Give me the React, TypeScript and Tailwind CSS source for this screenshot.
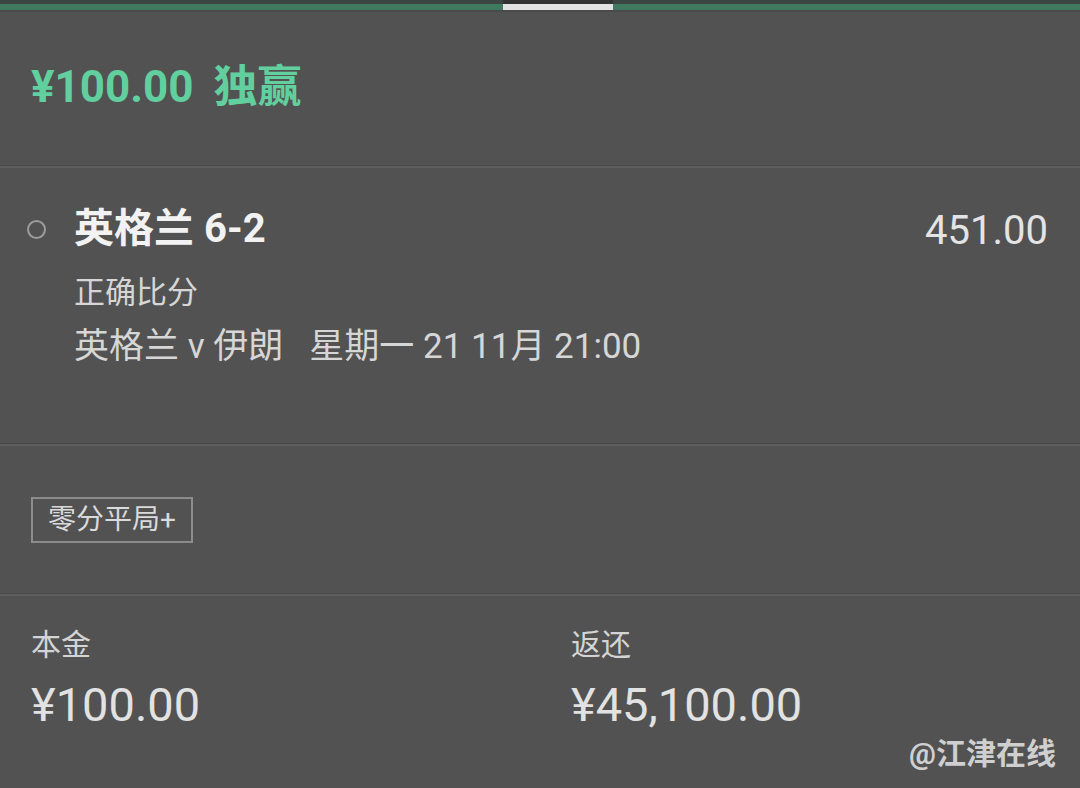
import React from 'react';

const latin = { fontFamily: 'Roboto, "Noto Sans CJK SC", sans-serif' };

const Divider = () => <div className="h-[3px] bg-[#5e5e5e] border-t border-[#494949]" />;

export default function App() {
  return (
    <div className="relative w-[1080px] h-[788px] overflow-hidden bg-[#525252]" style={latin}>
      {/* top tab bar */}
      <div className="flex h-[12px] flex-col">
        <div className="flex h-[4px] bg-[#3b4541]">
          <div className="w-[503px]" />
          <div className="w-[110px] bg-[#333333]" />
        </div>
        <div className="flex h-[6px] bg-[#3f7a60]">
          <div className="w-[503px]" />
          <div className="w-[110px] bg-[#e2e2e2]" />
        </div>
        <div className="h-[2px] bg-[#4a4a4a]" />
      </div>

      {/* header */}
      <div className="flex h-[153px] items-center pl-[31px] pb-[4px] text-[44px] font-bold leading-none text-[#61cf9e]">
        <span>¥100.00</span>
        <span className="ml-[20px]">独赢</span>
      </div>
      <Divider />

      {/* selection */}
      <div className="h-[275px] pt-[35px]">
        <div className="flex items-center justify-between pr-[32px]">
          <div className="flex items-center">
            <div className="ml-[27px] h-[19px] w-[19px] rounded-full border-2 border-[#9c9c9c]" />
            <span className="ml-[28px] text-[40px] font-bold leading-[48px] text-[#f2f2f2]">英格兰 6-2</span>
          </div>
          <span className="pt-[4px] text-[40px] leading-[48px] text-[#e4e4e4]">451.00</span>
        </div>
        <div className="pl-[74px] text-[#d6d6d6]">
          <div className="mt-[18px] text-[31px] leading-[40px]">正确比分</div>
          <div className="mt-[12px] text-[35px] leading-[44px] whitespace-pre">英格兰 v 伊朗   星期一 21 11月 21:00</div>
        </div>
      </div>
      <Divider />

      {/* tag */}
      <div className="h-[147px] pt-[51px] pl-[31px]">
        <div className="inline-flex h-[46px] items-center border-2 border-[#8c8c8c] px-[15px] text-[28px] text-[#dadada]">
          零分平局+
        </div>
      </div>
      <Divider />

      {/* totals */}
      <div className="grid grid-cols-[540px_1fr] pt-[29px] pl-[31px] text-[#e2e2e2]">
        <div>
          <div className="text-[30px] leading-[40px] text-[#d4d4d4]">本金</div>
          <div className="mt-[12px] text-[47px] leading-[56px]">¥100.00</div>
        </div>
        <div>
          <div className="text-[30px] leading-[40px] text-[#d4d4d4]">返还</div>
          <div className="mt-[12px] text-[47px] leading-[56px]">¥45,100.00</div>
        </div>
      </div>

      {/* watermark */}
      <div className="absolute right-[24px] bottom-[12px] text-[30px] font-bold text-[#cfcfcf]">@江津在线</div>
    </div>
  );
}
